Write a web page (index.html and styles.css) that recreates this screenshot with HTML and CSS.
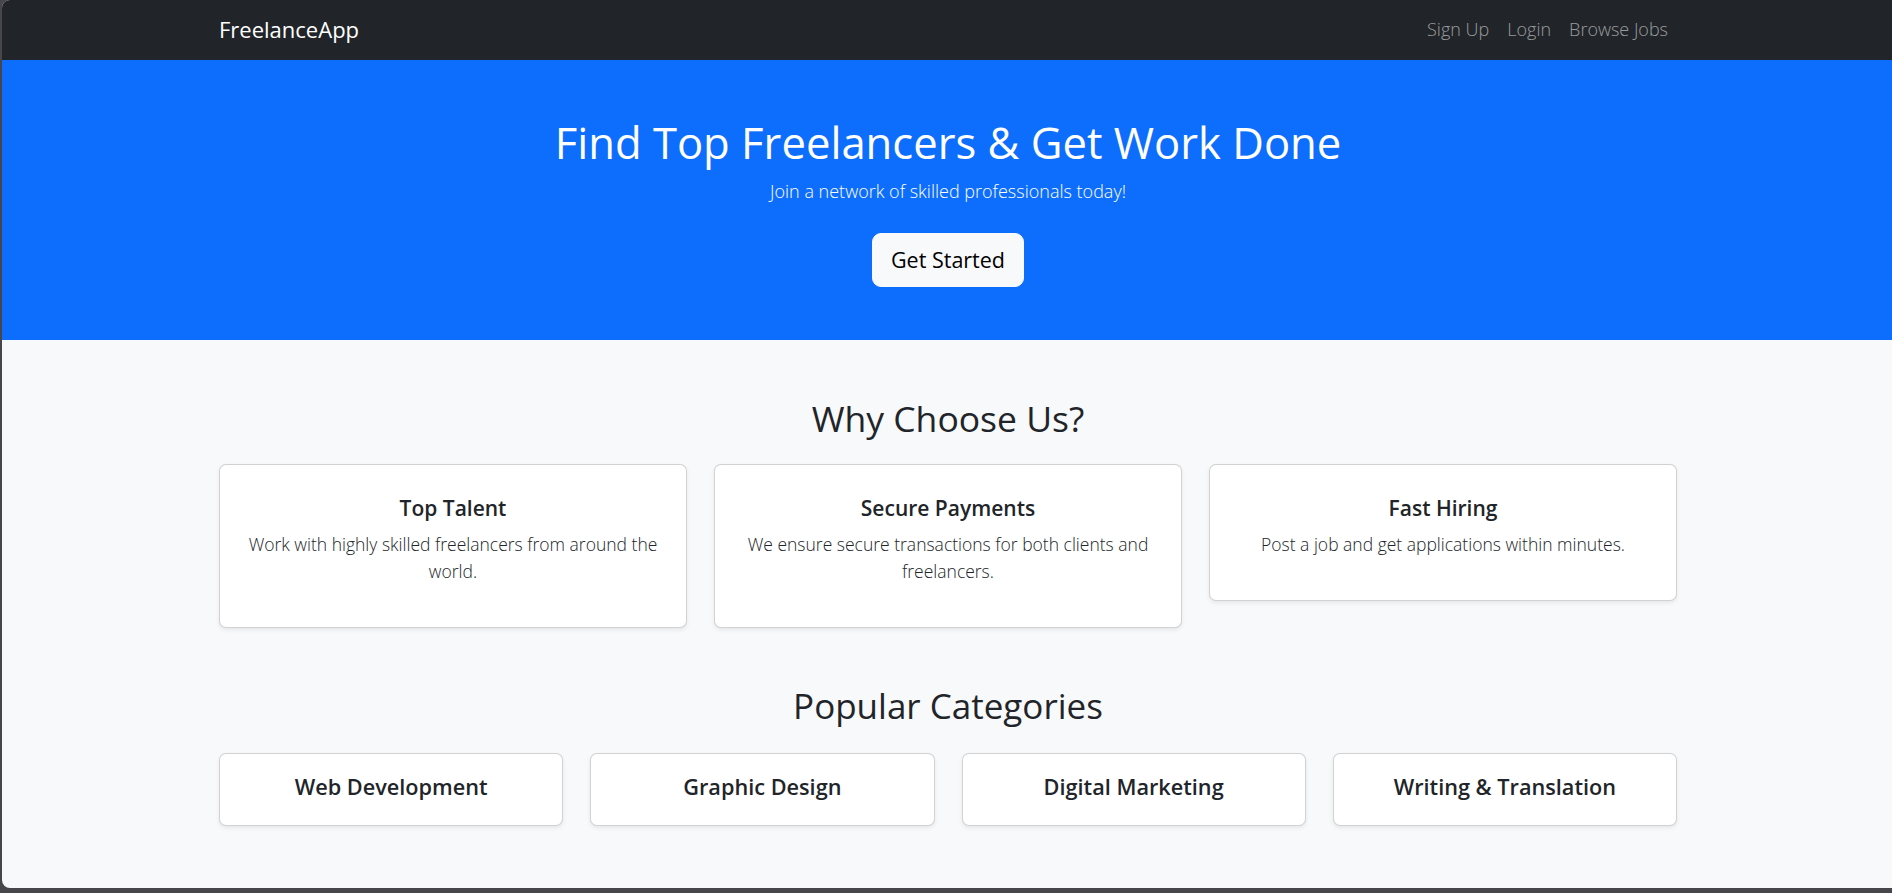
FILE: index.html
```html
<!DOCTYPE html>
<html lang="en">
<head>
<meta charset="utf-8">
<title>FreelanceApp</title>
<link rel="stylesheet" href="styles.css">
</head>
<body>
<div class="window">
  <nav class="navbar">
    <div class="container nav-inner">
      <a class="brand" href="#">FreelanceApp</a>
      <ul class="nav-links">
        <li><a href="#">Sign Up</a></li>
        <li><a href="#">Login</a></li>
        <li><a href="#">Browse Jobs</a></li>
      </ul>
    </div>
  </nav>

  <header class="hero">
    <div class="container">
      <h1 class="hero-title">Find Top Freelancers &amp; Get Work Done</h1>
      <p class="hero-sub">Join a network of skilled professionals today!</p>
      <a class="btn-light" href="#">Get Started</a>
    </div>
  </header>

  <main class="content">
    <section class="container">
      <h2 class="section-title">Why Choose Us?</h2>
      <div class="feature-grid">
        <div class="card feature-card">
          <h5 class="card-title">Top Talent</h5>
          <p class="card-text">Work with highly skilled freelancers from around the world.</p>
        </div>
        <div class="card feature-card">
          <h5 class="card-title">Secure Payments</h5>
          <p class="card-text">We ensure secure transactions for both clients and freelancers.</p>
        </div>
        <div class="card feature-card">
          <h5 class="card-title">Fast Hiring</h5>
          <p class="card-text">Post a job and get applications within minutes.</p>
        </div>
      </div>
    </section>

    <section class="container categories">
      <h2 class="section-title cat-title">Popular Categories</h2>
      <div class="category-grid">
        <div class="card category-card"><h5 class="card-title">Web Development</h5></div>
        <div class="card category-card"><h5 class="card-title">Graphic Design</h5></div>
        <div class="card category-card"><h5 class="card-title">Digital Marketing</h5></div>
        <div class="card category-card"><h5 class="card-title">Writing &amp; Translation</h5></div>
      </div>
    </section>
  </main>
</div>
</body>
</html>
```

FILE: styles.css
```css
* { box-sizing: border-box; }

html, body {
  margin: 0;
  padding: 0;
  height: 893px;
  overflow: hidden;
}

body {
  background: #46464b;
  font-family: "Open Sans", "Noto Sans", sans-serif;
  color: #212529;
}

.window {
  margin: 0 0 0 2px;
  height: 888px;
  border-radius: 8px 0 0 8px;
  overflow: hidden;
  background: #f8f9fa;
}

.container {
  width: 1458px;
  margin-left: calc(50% - 728px);
}

/* navbar */
.navbar {
  background: #212529;
  height: 60px;
}

.nav-inner {
  display: flex;
  align-items: center;
  justify-content: space-between;
  height: 60px;
  padding-bottom: 2px;
}

.brand {
  color: #fff;
  text-decoration: none;
  font-size: 22px;
  font-weight: 400;
  line-height: 1;
}

.nav-links {
  list-style: none;
  margin: 0;
  padding: 0;
  display: flex;
}

.nav-links a {
  display: block;
  padding: 0 9px;
  color: rgba(255, 255, 255, 0.55);
  text-decoration: none;
  font-size: 18px;
  font-weight: 300;
  line-height: 27px;
}

/* hero */
.hero {
  background: #0d6efd;
  color: #fff;
  text-align: center;
  padding: 55px 0 0;
  height: 280px;
}

.hero-title {
  margin: 0 0 9px;
  font-size: 43.6px;
  font-weight: 500;
  line-height: 54px;
}

.hero-sub {
  margin: 0 0 28px;
  font-size: 18px;
  font-weight: 300;
  line-height: 27px;
}

.btn-light {
  display: inline-block;
  padding: 9px 18px;
  background: #f8f9fa;
  border: 1px solid #f8f9fa;
  border-radius: 9px;
  color: #000;
  text-decoration: none;
  font-size: 21.5px;
  line-height: 34px;
}

/* content */
.content {
  padding: 57px 0 54px;
}

.section-title {
  margin: 0 0 24px;
  text-align: center;
  font-size: 35.5px;
  font-weight: 500;
  line-height: 43px;
}

.cat-title {
  font-size: 35px;
  margin-bottom: 26px;
}

.feature-grid {
  display: grid;
  grid-template-columns: repeat(3, 1fr);
  gap: 27px;
  align-items: start;
}

.category-grid {
  display: grid;
  grid-template-columns: repeat(4, 1fr);
  gap: 27px;
  align-items: start;
}

.categories {
  margin-top: 56px;
}

.card {
  background: #fff;
  border: 1px solid rgba(0, 0, 0, 0.175);
  border-radius: 7px;
  box-shadow: 0 2px 4.5px rgba(0, 0, 0, 0.075);
  text-align: center;
}

.feature-card {
  padding: 30px 27px 27px;
}

.category-card {
  padding: 19px 18px 25px;
}

.category-card .card-title {
  margin: 0;
  font-size: 21.7px;
}

.card-title {
  margin: 0 0 9px;
  font-size: 21px;
  font-weight: 600;
  line-height: 27px;
}

.card-text {
  margin: 0 0 15px;
  font-size: 17.5px;
  font-weight: 300;
  line-height: 27px;
  color: #212529;
}
```
